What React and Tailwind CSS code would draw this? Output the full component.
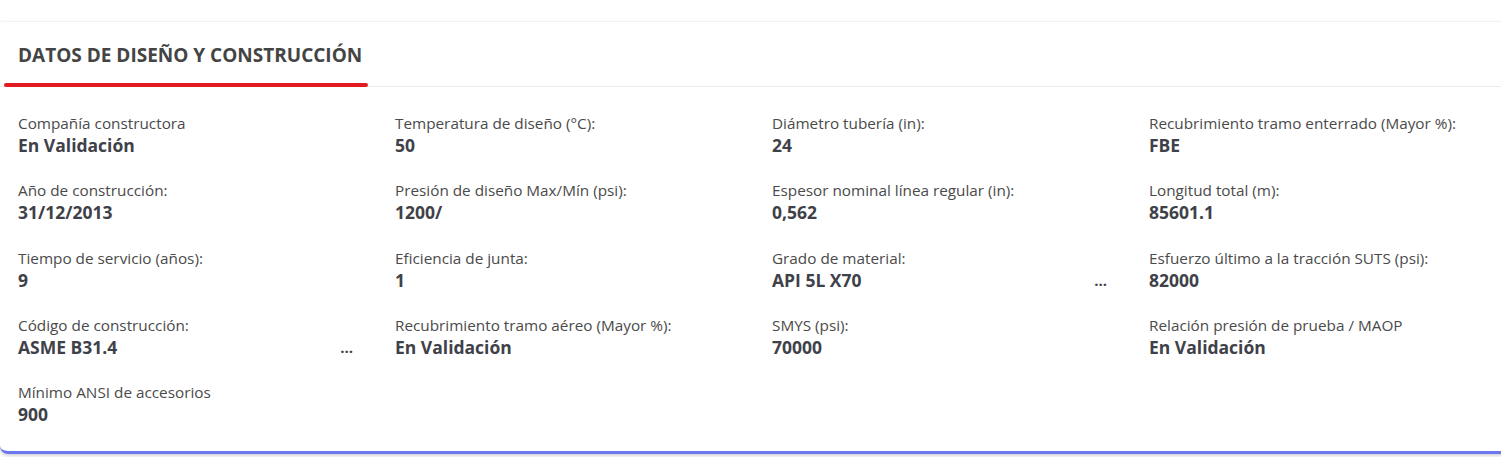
const columns = [
    [
        { label: 'Compañía constructora', value: 'En Validación' },
        { label: 'Año de construcción:', value: '31/12/2013' },
        { label: 'Tiempo de servicio (años):', value: '9' },
        { label: 'Código de construcción:', value: 'ASME B31.4', more: true },
        { label: 'Mínimo ANSI de accesorios', value: '900' },
    ],
    [
        { label: 'Temperatura de diseño (°C):', value: '50' },
        { label: 'Presión de diseño Max/Mín (psi):', value: '1200/' },
        { label: 'Eficiencia de junta:', value: '1' },
        { label: 'Recubrimiento tramo aéreo (Mayor %):', value: 'En Validación' },
    ],
    [
        { label: 'Diámetro tubería (in):', value: '24' },
        { label: 'Espesor nominal línea regular (in):', value: '0,562' },
        { label: 'Grado de material:', value: 'API 5L X70', more: true },
        { label: 'SMYS (psi):', value: '70000' },
    ],
    [
        { label: 'Recubrimiento tramo enterrado (Mayor %):', value: 'FBE' },
        { label: 'Longitud total (m):', value: '85601.1' },
        { label: 'Esfuerzo último a la tracción SUTS (psi):', value: '82000' },
        { label: 'Relación presión de prueba / MAOP', value: 'En Validación' },
    ],
];

const Field = ({ label, value, more }) => (
    <div className="h-[67.25px] pr-[42px]">
        <p className="text-[15.3px] leading-[20px] text-[#4a4a4a] whitespace-nowrap">{label}</p>
        <div className="mt-[1px] flex items-center justify-between">
            <p className="text-[17.5px] leading-[23px] font-bold text-[#3f4149]">{value}</p>
            {more && <span className="text-[15px] font-bold text-[#3f4149] leading-[23px]">...</span>}
        </div>
    </div>
);

export default function App() {
    return (
        <div className="min-h-[457px] bg-white pt-[22px] overflow-hidden" style={{ fontFamily: '"Open Sans", "Noto Sans", sans-serif' }}>
            <div className="w-[1540px] bg-white rounded-bl-lg border-b-[3px] border-[#6c78f2] shadow-[0_0_3px_rgba(0,0,0,0.08),0_2px_4px_rgba(0,0,0,0.16)]">
                <div className="h-[65px] border-b border-[#ebebeb] pl-[4px] flex">
                    <div className="relative flex items-center pl-[14px] pr-[6px]">
                        <h2 className="text-[19px] font-bold uppercase text-[#444] mt-[2px]">
                            Datos de diseño y construcción
                        </h2>
                        <span className="absolute left-0 right-0 -bottom-[1px] h-[4px] rounded-full bg-[#e21b23]" />
                    </div>
                </div>
                <div className="grid grid-cols-[repeat(4,377px)] pl-[18px] pt-[26px] pb-[2px]">
                    {columns.map((col, i) => (
                        <div key={i}>
                            {col.map((f) => (
                                <Field key={f.label} {...f} />
                            ))}
                        </div>
                    ))}
                </div>
            </div>
        </div>
    );
}
